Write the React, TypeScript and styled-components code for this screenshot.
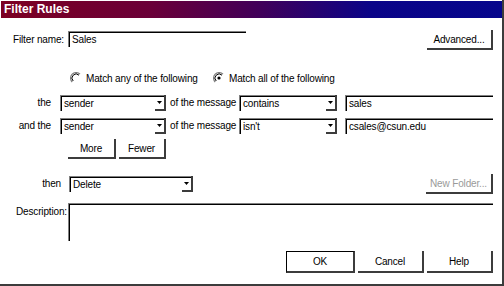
import React from "react";
import styled, { createGlobalStyle } from "styled-components";

const GlobalStyle = createGlobalStyle`
  html, body {
    margin: 0;
    padding: 0;
    background: #fff;
  }
  body {
    font-family: "Liberation Sans", Arial, sans-serif;
    font-size: 10px;
    letter-spacing: -0.15px;
    color: #000;
  }
  * {
    box-sizing: border-box;
  }
`;

const Window = styled.div`
  width: 504px;
  height: 286px;
  background: #fff;
  border-right: 2px solid #3c3c3c;
  border-bottom: 2px solid #3c3c3c;
  display: flex;
  flex-direction: column;
  overflow: hidden;
`;

const TitleBar = styled.div`
  height: 17px;
  margin: 1px 0 0 1px;
  padding-left: 3px;
  background: linear-gradient(to right, #7c0022 0%, #6a0038 30%, #40005a 52%, #0a0488 74%, #06068c 100%);
  color: #fff;
  font-weight: bold;
  font-size: 12px;
  letter-spacing: 0;
  line-height: 17px;
`;

const Body = styled.div`
  display: flex;
  flex-direction: column;
  padding-right: 9px;
`;

const Row = styled.div<{ $top: number; $height: number }>`
  display: flex;
  align-items: flex-start;
  margin-top: ${(p) => p.$top}px;
  height: ${(p) => p.$height}px;
`;

const Label = styled.span<{ $width: number; $gap: number; $pad?: number }>`
  width: ${(p) => p.$width}px;
  margin-right: ${(p) => p.$gap}px;
  padding-top: ${(p) => p.$pad ?? 2}px;
  text-align: right;
  white-space: nowrap;
  flex-shrink: 0;
`;

const Field = styled.div<{ $width?: number; $height?: number }>`
  ${(p) => (p.$width ? `width: ${p.$width}px;` : "flex: 1;")}
  height: ${(p) => p.$height ?? 16}px;
  border-top: 1px solid #808080;
  border-left: 1px solid #808080;
  box-shadow: inset 1px 1px 0 #000;
  padding: 2px 0 0 3px;
  white-space: nowrap;
`;

const Combo = styled.div<{ $width: number }>`
  display: flex;
  width: ${(p) => p.$width}px;
  height: 16px;
  border-top: 1px solid #808080;
  border-left: 1px solid #808080;
  box-shadow: inset 1px 1px 0 #000;
  flex-shrink: 0;
`;

const ComboValue = styled.span`
  flex: 1;
  padding: 2px 0 0 3px;
  white-space: nowrap;
`;

const ComboArrow = styled.span`
  width: 11px;
  height: 16px;
  margin-top: -1px;
  border-right: 2px solid #3c3c3c;
  border-bottom: 2px solid #3c3c3c;
  display: flex;
  align-items: center;
  justify-content: center;
`;

const Button = styled.div<{ $width: number; $height: number; $disabled?: boolean; $default?: boolean }>`
  width: ${(p) => p.$width}px;
  height: ${(p) => p.$height}px;
  flex-shrink: 0;
  display: flex;
  align-items: center;
  justify-content: center;
  color: ${(p) => (p.$disabled ? "#9a9a9a" : "#000")};
  border-right: 2px solid #3c3c3c;
  border-bottom: 2px solid #3c3c3c;
  ${(p) => (p.$default ? "border-top: 1px solid #000; border-left: 1px solid #000;" : "")}
`;

const Spacer = styled.div`
  flex: 1;
`;

const Indent = styled.div<{ $width: number }>`
  width: ${(p) => p.$width}px;
  flex-shrink: 0;
`;

const Text = styled.span<{ $width: number; $pad: number }>`
  width: ${(p) => p.$width}px;
  padding: 2px 0 0 ${(p) => p.$pad}px;
  white-space: nowrap;
  flex-shrink: 0;
`;

const RadioOption = styled.label<{ $width?: number }>`
  display: flex;
  align-items: center;
  gap: 4px;
  ${(p) => (p.$width ? `width: ${p.$width}px;` : "")}
  white-space: nowrap;
`;

const ButtonGroup = styled.div<{ $gap: number }>`
  display: flex;
  gap: ${(p) => p.$gap}px;
`;

const Arrow = () => (
  <svg width="5" height="3" viewBox="0 0 5 3">
    <path d="M0 0H5L2.5 3Z" fill="#000" />
  </svg>
);

const Radio: React.FC<{ checked?: boolean }> = ({ checked }) => (
  <svg width="12" height="12" viewBox="0 0 12 12">
    <path d="M10 2.2A5.2 5.2 0 0 0 2.2 10" fill="none" stroke="#7a7a7a" strokeWidth="1.2" />
    <path d="M9 3.2A3.9 3.9 0 0 0 3.2 9" fill="none" stroke="#000" strokeWidth="1" />
    {checked && <circle cx="6" cy="6" r="1.6" fill="#000" />}
  </svg>
);

const Select: React.FC<{ width: number; value: string }> = ({ width, value }) => (
  <Combo $width={width}>
    <ComboValue>{value}</ComboValue>
    <ComboArrow>
      <Arrow />
    </ComboArrow>
  </Combo>
);

export default function App() {
  return (
    <>
      <GlobalStyle />
      <Window>
        <TitleBar>Filter Rules</TitleBar>
        <Body>
          <Row $top={12} $height={20}>
            <Label $width={64} $gap={4} $pad={4}>Filter name:</Label>
            <Field $width={178} style={{ marginTop: 1 }}>Sales</Field>
            <Spacer />
            <Button $width={66} $height={20}>Advanced...</Button>
          </Row>

          <Row $top={22} $height={12}>
            <Indent $width={70} />
            <RadioOption $width={143}>
              <Radio />
              Match any of the following
            </RadioOption>
            <RadioOption>
              <Radio checked />
              Match all of the following
            </RadioOption>
          </Row>

          <Row $top={11} $height={16}>
            <Label $width={51} $gap={9}>the</Label>
            <Select width={106} value="sender" />
            <Text $width={73} $pad={4}>of the message</Text>
            <Select width={98} value="contains" />
            <Indent $width={8} />
            <Field>sales</Field>
          </Row>

          <Row $top={7} $height={16}>
            <Label $width={51} $gap={9}>and the</Label>
            <Select width={106} value="sender" />
            <Text $width={73} $pad={4}>of the message</Text>
            <Select width={98} value="isn't" />
            <Indent $width={8} />
            <Field>csales@csun.edu</Field>
          </Row>

          <Row $top={5} $height={20}>
            <Indent $width={68} />
            <ButtonGroup $gap={3}>
              <Button $width={48} $height={20}>More</Button>
              <Button $width={47} $height={20}>Fewer</Button>
            </ButtonGroup>
          </Row>

          <Row $top={15} $height={20}>
            <Label $width={61} $gap={8} $pad={4}>then</Label>
            <Indent $width={124} style={{ paddingTop: 2 }}>
              <Select width={124} value="Delete" />
            </Indent>
            <Spacer />
            <Button $width={67} $height={20} $disabled>New Folder...</Button>
          </Row>

          <Row $top={9} $height={38}>
            <Label $width={67} $gap={1} $pad={3}>Description:</Label>
            <Field $height={38} />
          </Row>

          <Row $top={10} $height={22}>
            <Spacer />
            <ButtonGroup $gap={3}>
              <Button $width={69} $height={22} $default>OK</Button>
              <Button $width={66} $height={22}>Cancel</Button>
              <Button $width={66} $height={22}>Help</Button>
            </ButtonGroup>
          </Row>
        </Body>
      </Window>
    </>
  );
}
